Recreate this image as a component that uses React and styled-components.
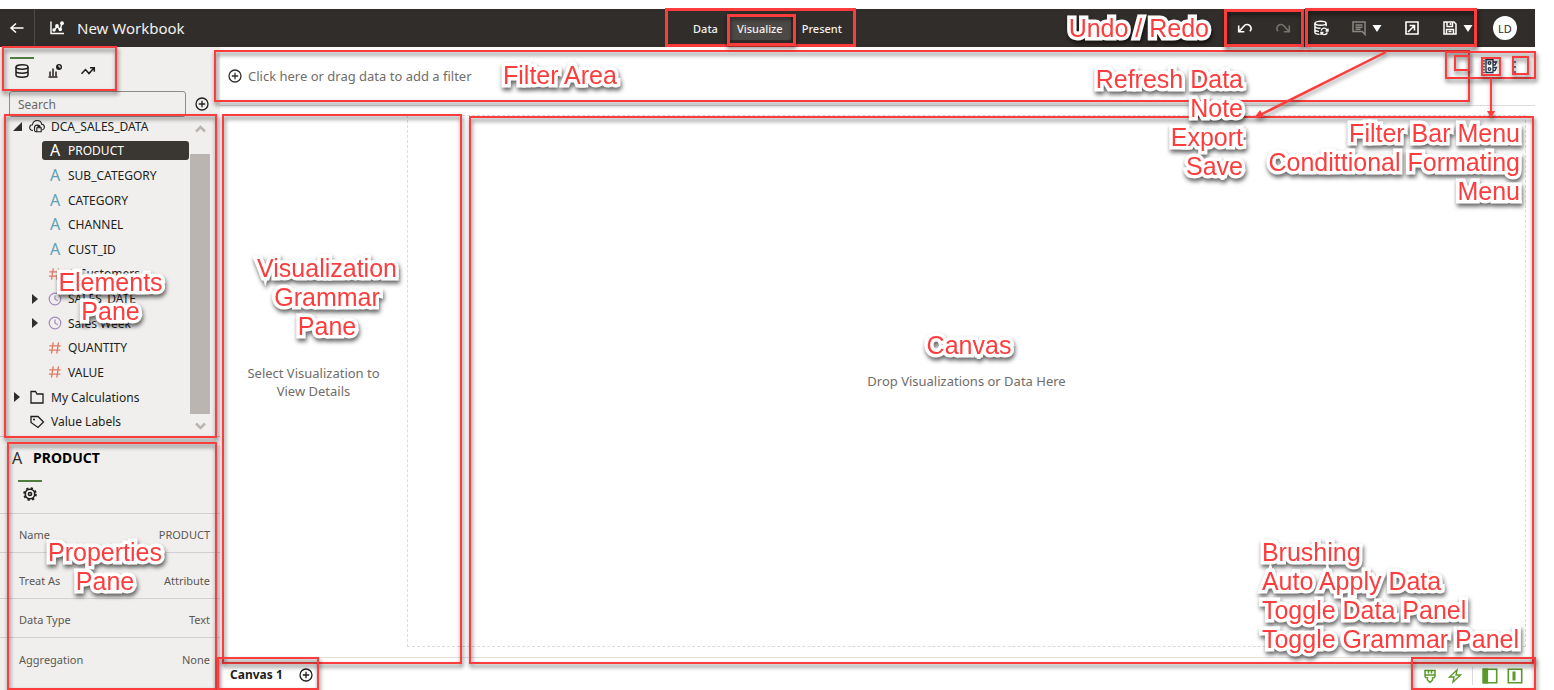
import React from 'react';
import styled, { createGlobalStyle, css } from 'styled-components';

const RED = '#fd3d3d';
const INK = '#312d2a';

const GlobalStyle = createGlobalStyle`
  * { box-sizing: border-box; }
  body { margin: 0; background: #fff; font-family: "Noto Sans", "Open Sans", sans-serif; color: #201e1c; }
  button, input { font: inherit; color: inherit; }
  button { border: 0; background: none; padding: 0; margin: 0; cursor: pointer; }
  ul, dl, dd, h1, h2, p { margin: 0; padding: 0; }
  ul { list-style: none; }
  svg { display: block; flex: none; }
`;

/* ---------- Page frame ---------- */
const Page = styled.div`
  position: relative;
  display: flex;
  flex-direction: column;
  min-height: 100vh;
  padding: 9px 19px 0 0;
`;

const Header = styled.header`
  display: grid;
  grid-template-columns: 1fr auto 1fr;
  align-items: center;
  height: 38px;
  background: ${INK};
  color: #fff;
`;

const Brand = styled.div`
  display: flex;
  align-items: center;
  align-self: stretch;
`;

const BackButton = styled.button`
  display: flex;
  align-items: center;
  align-self: stretch;
  justify-content: center;
  width: 35px;
  border-right: 1px solid #4e4a46;
  margin-right: 14px;
`;

const Title = styled.h1`
  margin-left: 12px;
  font-size: 15px;
  font-weight: 400;
  line-height: 24px;
  color: #f3f1ef;
`;

const Modes = styled.nav`
  display: flex;
  gap: 3px;
`;

const Mode = styled.button`
  height: 23px;
  padding: 0 8px;
  border-radius: 2px;
  font-size: 11px;
  font-weight: 500;
  color: #f3f1ef;
  background: ${(p) => (p.$active ? '#4c4845' : 'transparent')};
`;

const Actions = styled.div`
  display: flex;
  align-items: center;
  justify-content: flex-end;
  gap: 22px;
  padding-right: 18px;
`;

const ActionGroup = styled.div`
  display: flex;
  align-items: center;
  gap: 5px;
`;

const IconButton = styled.button`
  display: flex;
  align-items: center;
  justify-content: center;
  color: ${(p) => p.$color || 'inherit'};
`;

const Avatar = styled.button`
  width: 24px;
  height: 24px;
  margin-left: -2px;
  border-radius: 50%;
  background: #fff;
  color: ${INK};
  font-size: 11px;
`;

const Body = styled.div`
  display: grid;
  grid-template-columns: 220px 1fr;
  flex: 1;
`;

/* ---------- Sidebar ---------- */
const Sidebar = styled.aside`
  display: flex;
  flex-direction: column;
  background: #f0efed;
`;

const PanelTabs = styled.div`
  display: flex;
  gap: 9px;
  padding: 10px 10px 0;
  height: 44px;
`;

const PanelTab = styled.button`
  display: flex;
  align-items: center;
  justify-content: center;
  width: 24px;
  height: 26px;
  border-top: 2px solid ${(p) => (p.$active ? '#4f7d3f' : 'transparent')};
`;

const SearchRow = styled.div`
  display: flex;
  align-items: center;
  gap: 8px;
  height: 26px;
  padding-left: 9px;
`;

const SearchInput = styled.input`
  width: 177px;
  height: 26px;
  padding: 0 8px;
  border: 1px solid #8f8c88;
  border-radius: 3px;
  background: transparent;
  font-size: 12px;
  &::placeholder { color: #6b6763; opacity: 1; }
`;

const Elements = styled.div`
  display: flex;
  height: 320px;
  margin-top: -3px;
`;

const Tree = styled.ul`
  display: flex;
  flex: 1;
  flex-direction: column;
`;

const TreeItem = styled.li`
  display: flex;
  flex: 1;
  align-items: center;
  padding-left: ${(p) => (p.$nested ? 28 : 10)}px;
`;

const Twisty = styled.span`
  display: flex;
  justify-content: center;
  width: 14px;
`;

const TreeButton = styled.button`
  display: flex;
  flex: 1;
  align-items: center;
  gap: 6px;
  height: 19px;
  padding-left: ${(p) => (p.$nested ? 6 : 5)}px;
  border-radius: 3px;
  font-size: 12px;
  line-height: 19px;
  white-space: nowrap;
  text-align: left;
  ${(p) => p.$selected && css`background: #3a3631; color: #fff;`}
`;

const TypeMark = styled.span`
  display: flex;
  align-items: center;
  justify-content: center;
  width: 14px;
  font-size: 16px;
  color: ${(p) => p.$color};
`;

const ScrollRail = styled.div`
  display: flex;
  flex-direction: column;
  align-items: center;
  justify-content: space-between;
  width: 20px;
  margin: 4px 10px 0 1px;
  padding: 7px 0 4px;
`;

const Thumb = styled.div`
  width: 20px;
  flex: 1;
  margin: 21px 0 8px;
  background: #bab5b0;
`;

const Properties = styled.section`
  flex: 1;
  margin-top: 2px;
  border-top: 1px solid #c4c1be;
`;

const PropertiesHead = styled.div`
  display: flex;
  align-items: center;
  gap: 9px;
  padding: 8px 10px 0;
  height: 34px;
`;

const PropertiesTitle = styled.h2`
  font-size: 14px;
  font-weight: 700;
  line-height: 24px;
  color: #000;
`;

const PropertiesTabs = styled.div`
  display: flex;
  height: 43px;
  padding: 9px 18px 0;
  border-bottom: 1px solid #d2d0ce;
`;

const PropertyList = styled.dl`
  display: flex;
  flex-direction: column;
`;

const Property = styled.div`
  display: flex;
  align-items: flex-end;
  justify-content: space-between;
  height: ${(p) => (p.$tall ? 46 : 39)}px;
  padding: 0 10px 9px 19px;
  border-bottom: 1px solid #d2d0ce;
  font-size: 11px;
  line-height: 17px;
  color: #5c5853;
  &:last-child { border-bottom: 0; }
`;

/* ---------- Main area ---------- */
const Main = styled.main`
  display: flex;
  flex-direction: column;
  min-width: 0;
`;

const FilterBar = styled.div`
  display: flex;
  align-items: center;
  justify-content: space-between;
  height: 59px;
  padding-left: 7px;
  border-bottom: 1px solid #dddbd9;
`;

const FilterButton = styled.button`
  display: flex;
  align-items: center;
  gap: 5px;
  font-size: 13px;
  line-height: 20px;
  color: #716d68;
`;

const FilterTools = styled.div`
  display: flex;
  align-items: flex-start;
  align-self: stretch;
  gap: 14px;
  padding: 11px 7px 0 0;
`;

const Workspace = styled.div`
  display: grid;
  grid-template-columns: 187px 1fr;
  flex: 1;
  padding-right: 9px;
  border-bottom: 1px solid #e2e0de;
`;

const Hint = styled.p`
  font-size: 13px;
  line-height: 18px;
  color: #716d68;
  text-align: center;
`;

const Grammar = styled.section`
  display: flex;
  align-items: center;
  justify-content: center;
  padding: 0 20px;
`;

const Canvas = styled.section`
  display: flex;
  align-items: center;
  justify-content: center;
  margin: 9px 0 10px;
  border: 1px dashed #dedcda;
`;

const Footer = styled.footer`
  display: flex;
  align-items: center;
  justify-content: space-between;
  height: 32px;
  padding: 2px 12px 0 10px;
`;

const CanvasTabs = styled.div`
  display: flex;
  align-items: center;
  gap: 15px;
`;

const CanvasTab = styled.button`
  font-size: 12px;
  font-weight: 700;
  line-height: 20px;
`;

const FooterTools = styled.div`
  display: flex;
  align-items: center;
  gap: 9px;
  padding-top: 2px;
  color: #5b9a2b;
`;

const Separator = styled.span`
  width: 1px;
  height: 18px;
  background: #dddbd9;
`;

/* ---------- Callouts over the page ---------- */
const px = (name, v) => (v === undefined ? '' : `${name}: ${v}px;`);
const place = css`
  position: absolute;
  ${(p) => px('top', p.$top)}
  ${(p) => px('bottom', p.$bottom)}
  ${(p) => px('left', p.$left)}
  ${(p) => px('right', p.$right)}
  ${(p) => px('width', p.$width)}
  ${(p) => px('height', p.$height)}
`;

const Callouts = styled.div`
  position: absolute;
  inset: 0 19px 0 0;
  pointer-events: none;
`;

const Outline = styled.div`
  ${place}
  border: ${(p) => p.$line || 2}px solid ${RED};
  filter: drop-shadow(1px 3px 2px rgba(0, 0, 0, 0.6));
`;

const CenterRow = styled.div`
  position: absolute;
  inset: 8px 14px auto 0;
  display: flex;
  justify-content: center;
`;

const ModesOutline = styled.div`
  display: flex;
  justify-content: center;
  width: 191px;
  height: 39px;
  padding: 3px 0 0 1px;
  border: 3px solid ${RED};
`;

const ActiveModeOutline = styled.div`
  width: 69px;
  height: 32px;
  border: 3px solid ${RED};
  filter: drop-shadow(0 2px 2px rgba(0, 0, 0, 0.6));
`;

const Note = styled.p`
  ${place}
  font-family: "Liberation Sans", Arial, sans-serif;
  font-size: 25px;
  line-height: 29px;
  white-space: pre-line;
  text-align: ${(p) => p.$align || 'center'};
  color: ${RED};
  -webkit-text-stroke: 7px #fff;
  paint-order: stroke fill;
  filter: drop-shadow(1px 3px 2px rgba(0, 0, 0, 0.6));
`;

const Arrow = styled.svg`
  ${place}
  filter: drop-shadow(1px 3px 2px rgba(0, 0, 0, 0.4));
`;

/* ---------- Icons ---------- */
const Icon = ({ size = 16, w = 1.3, children }) => (
  <svg width={size} height={size} viewBox="0 0 16 16" fill="none" stroke="currentColor" strokeWidth={w} aria-hidden="true">
    {children}
  </svg>
);

const BackIcon = () => <Icon w={1.5}><path d="M14.5 8H2M7 3.5 2 8l5 4.500" /></Icon>;
const WorkbookIcon = () => (
  <Icon w={1.4}>
    <path d="M2 1.500V13.500H15M5 10.500l3-4M8 6.500l3.300 3L13 3.200" />
    <g fill="currentColor" stroke="none">
      <circle cx="5" cy="10" r="1.700" /><circle cx="8" cy="6" r="1.900" /><circle cx="11.300" cy="9.500" r="1.800" /><circle cx="13" cy="3.200" r="1.900" />
    </g>
  </Icon>
);
const UndoIcon = () => <Icon w={1.6}><path d="M1.700 5.500v6.300h5.600M2 11.500 7 6a3.800 3.800 0 0 1 5.800-.4c1.900 1.900 1.500 4 .1 5.700" /></Icon>;
const RedoIcon = () => <Icon w={1.6}><path d="M14.300 5.500v6.300H8.700M14 11.500 9 6a3.800 3.800 0 0 0-5.800-.4c-1.900 1.900-1.500 4-.1 5.700" /></Icon>;
const RefreshIcon = () => (
  <Icon w={1.4}>
    <ellipse cx="7.500" cy="3.200" rx="5.600" ry="2" />
    <path d="M1.900 3.200v9.300c0 1.100 2 1.800 4.600 1.900M13.100 3.200v3M1.900 6.300c0 1.300 2.500 2 5.600 2M1.900 9.500c0 1.100 1.800 1.700 4 1.900" />
    <path d="M8.200 10.500a3 3 0 0 1 5.600-.8l1 1.300M15 8.500V11h-2.500M14.300 12.500a3 3 0 0 1-5.200 1l-.9-1.100M8 15v-2.600h2.400" />
  </Icon>
);
const NoteIcon = () => <Icon w={1.5}><path d="M2 2h12v12.500L11.200 11.500H2zM4.500 5h7M4.500 7.200h7M4.500 9.200h5" /></Icon>;
const ExportIcon = () => <Icon w={1.6}><path d="M2 2h12v12H2zM5.500 5.500h5v5M10.300 5.700 4 12" /></Icon>;
const SaveIcon = () => <Icon w={1.5}><path d="M2 2h10l2 2v10H2zM5 2v4.500h5.500V2M8.500 3v2M4.500 14V9.500h7V14M6.500 11.500h3" /></Icon>;
const Caret = () => <svg width="10" height="7" viewBox="0 0 10 7" fill="#fff" aria-hidden="true"><path d="M.5 0h9L5 7z" /></svg>;
const PlusIcon = () => <Icon><circle cx="8" cy="8" r="6" /><path d="M8 4.800v6.400M4.800 8h6.400" /></Icon>;
const DataIcon = () => (
  <Icon w={1.5}>
    <ellipse cx="8" cy="4" rx="6" ry="2.200" />
    <path d="M2 4v8c0 1.300 2.600 2.200 6 2.200s6-.9 6-2.200V4M2 8c0 1.300 2.600 2.200 6 2.200s6-.9 6-2.200" />
  </Icon>
);
const ChartIcon = () => (
  <Icon w={1.5}>
    <path d="M1.500 14h9M3 13V8.500M6 13V5.500M9 13V8.500" />
    <circle cx="12" cy="4" r="3" fill="currentColor" stroke="none" /><path d="M12 4V2M12 4h2" stroke="#f0efed" strokeWidth="1" />
  </Icon>
);
const TrendIcon = () => <Icon w={1.5}><path d="M1.500 10.800 5.500 6.500l3.500 4 5-5.500M10 4.700h4.300v4" /></Icon>;
const OpenMark = () => <svg width="9" height="9" viewBox="0 0 9 9" fill={INK} aria-hidden="true"><path d="M9 0v9H0z" /></svg>;
const ClosedMark = () => <svg width="6" height="10" viewBox="0 0 6 10" fill={INK} aria-hidden="true"><path d="M0 0v10l6-5z" /></svg>;
const CloudIcon = () => (
  <Icon w={1.1}>
    <path d="M4 12.500C1.500 12.500.7 11 .7 9.500S2 6.700 3.500 6.700C4 4 6 2.500 8.200 2.500c2.400 0 4 1.500 4.500 3.700 1.600.2 2.700 1.500 2.700 3 0 1.400-.8 2.300-2.200 2.900" />
    <path d="M5.500 9.500c0-3 5-3 5.500-1M5.500 9.500v2.700c0 1 .8 1.600 2 1.800M7.800 9.800h4.400v4H7.800zM9 9.500V8.400h2v1.100" />
  </Icon>
);
const FolderIcon = () => <Icon><path d="M2 2.500h4.500L8 5h6v9H2z" /></Icon>;
const TagIcon = () => <Icon><path d="M2 2.500h7l5.500 5.500L9 13.500 2 8.500z" /><circle cx="5" cy="5.500" r="1" fill="currentColor" stroke="none" /></Icon>;
const ClockIcon = () => <Icon size={14} w={1.4}><circle cx="8" cy="8" r="6.600" /><path d="M8 4v4.200l3.200 1.800" /></Icon>;
const HashIcon = () => <Icon size={14} w={1.5}><path d="M6 1.500 4 14.500M12 1.500l-2 13M1.500 5.500h13M1 10.500h13" /></Icon>;
const GearIcon = () => (
  <Icon size={14} w={1.8}><circle cx="8" cy="8" r="5.400" /><circle cx="8" cy="8" r="1.800" /><circle cx="8" cy="8" r="6.800" strokeWidth="2" strokeDasharray="2.670 2.670" /></Icon>
);
const Chevron = ({ down }) => (
  <svg width="11" height="8" viewBox="0 0 11 8" fill="none" stroke="#bab5b0" strokeWidth="2.500" aria-hidden="true"><path d={down ? 'M1 1.500 5.500 6 10 1.500' : 'M1 6.500 5.500 2 10 6.500'} /></svg>
);
const FormatIcon = () => (
  <Icon w={1.3}>
    <path d="M4 1.500h7v13H4zM11 4h3.500L13 7h-2M11 9.500h3.500L13 12.500h-2" />
    <circle cx="7.500" cy="5" r="1.300" /><circle cx="7.500" cy="11" r="1.300" /><path d="M2 2v13" strokeDasharray="1.500 1.500" />
  </Icon>
);
const DotsIcon = () => <Icon><path d="M3 3v12" stroke="#3b5b87" strokeWidth="1.500" strokeDasharray="2 3" /></Icon>;
const BrushIcon = () => <Icon w={1.5}><path d="M3 2.500h10v5.200c0 1.500-1 2.300-2.500 2.300v2L8 14.500 5.500 12v-2C4 10 3 9.200 3 7.700zM3 7h10M6.500 2.500v3M9.500 2.500v3" /></Icon>;
const BoltIcon = () => <Icon w={1.4}><path d="M10 2 2.500 9H7l-1 5L13.500 7H9z" /></Icon>;
const LeftPanelIcon = () => <Icon w={1.6}><path d="M1.300 1.300h13.400v13.400H1.300z" /><path d="M1.300 1.300h4v13.400h-4z" fill="currentColor" /></Icon>;
const MidPanelIcon = () => <Icon w={1.6}><path d="M1.300 1.300h13.400v13.400H1.300z" /><path d="M5.500 3.500h3v9h-3z" fill="currentColor" stroke="none" /></Icon>;

const BLUE = '#5f9fb8';
const CORAL = '#dd7a66';
const VIOLET = '#a58bbd';

const ROWS = [
  { label: 'DCA_SALES_DATA', mark: 'open', icon: <CloudIcon /> },
  { label: 'PRODUCT', type: 'text', selected: true },
  { label: 'SUB_CATEGORY', type: 'text' },
  { label: 'CATEGORY', type: 'text' },
  { label: 'CHANNEL', type: 'text' },
  { label: 'CUST_ID', type: 'text' },
  { label: '# Customers', type: 'number' },
  { label: 'SALES_DATE', type: 'time', mark: 'closed' },
  { label: 'Sales Week', type: 'time', mark: 'closed' },
  { label: 'QUANTITY', type: 'number' },
  { label: 'VALUE', type: 'number' },
  { label: 'My Calculations', mark: 'closed', icon: <FolderIcon /> },
  { label: 'Value Labels', icon: <TagIcon /> },
];

const PROPS = [
  ['Name', 'PRODUCT'],
  ['Treat As', 'Attribute', true],
  ['Data Type', 'Text'],
  ['Aggregation', 'None'],
];

function ElementRow({ row }) {
  const nested = Boolean(row.type);
  return (
    <TreeItem $nested={nested}>
      <Twisty>{row.mark === 'open' ? <OpenMark /> : row.mark === 'closed' ? <ClosedMark /> : null}</Twisty>
      <TreeButton $nested={nested} $selected={row.selected}>
        {row.type === 'text' && <TypeMark $color={row.selected ? '#fff' : BLUE}>A</TypeMark>}
        {row.type === 'number' && <TypeMark $color={CORAL}><HashIcon /></TypeMark>}
        {row.type === 'time' && <TypeMark $color={VIOLET}><ClockIcon /></TypeMark>}
        {row.icon}
        <span>{row.label}</span>
      </TreeButton>
    </TreeItem>
  );
}

export default function App() {
  return (
    <Page>
      <GlobalStyle />
      <Header>
        <Brand>
          <BackButton aria-label="Back"><BackIcon /></BackButton>
          <WorkbookIcon />
          <Title>New Workbook</Title>
        </Brand>
        <Modes>
          <Mode>Data</Mode>
          <Mode $active>Visualize</Mode>
          <Mode>Present</Mode>
        </Modes>
        <Actions>
          <IconButton aria-label="Undo"><UndoIcon /></IconButton>
          <IconButton aria-label="Redo" $color="#75716d"><RedoIcon /></IconButton>
          <IconButton aria-label="Refresh data"><RefreshIcon /></IconButton>
          <ActionGroup>
            <IconButton aria-label="Note" $color="#8a8682"><NoteIcon /></IconButton>
            <IconButton aria-label="Note options"><Caret /></IconButton>
          </ActionGroup>
          <IconButton aria-label="Export"><ExportIcon /></IconButton>
          <ActionGroup>
            <IconButton aria-label="Save"><SaveIcon /></IconButton>
            <IconButton aria-label="Save options"><Caret /></IconButton>
          </ActionGroup>
          <Avatar>LD</Avatar>
        </Actions>
      </Header>

      <Body>
        <Sidebar>
          <PanelTabs>
            <PanelTab $active aria-label="Data"><DataIcon /></PanelTab>
            <PanelTab aria-label="Visualizations"><ChartIcon /></PanelTab>
            <PanelTab aria-label="Analytics"><TrendIcon /></PanelTab>
          </PanelTabs>
          <SearchRow>
            <SearchInput type="search" placeholder="Search" aria-label="Search" />
            <IconButton aria-label="Add data"><PlusIcon /></IconButton>
          </SearchRow>
          <Elements>
            <Tree>{ROWS.map((row) => <ElementRow key={row.label} row={row} />)}</Tree>
            <ScrollRail><Chevron /><Thumb /><Chevron down /></ScrollRail>
          </Elements>
          <Properties>
            <PropertiesHead>
              <TypeMark $color={INK}>A</TypeMark>
              <PropertiesTitle>PRODUCT</PropertiesTitle>
            </PropertiesHead>
            <PropertiesTabs>
              <PanelTab $active aria-label="General"><GearIcon /></PanelTab>
            </PropertiesTabs>
            <PropertyList>
              {PROPS.map(([name, value, tall]) => (
                <Property key={name} $tall={tall}><dt>{name}</dt><dd>{value}</dd></Property>
              ))}
            </PropertyList>
          </Properties>
        </Sidebar>

        <Main>
          <FilterBar>
            <FilterButton><IconButton as="span" $color={INK}><PlusIcon /></IconButton>Click here or drag data to add a filter</FilterButton>
            <FilterTools>
              <IconButton aria-label="Conditional formatting" $color="#26364d"><FormatIcon /></IconButton>
              <IconButton aria-label="Menu"><DotsIcon /></IconButton>
            </FilterTools>
          </FilterBar>
          <Workspace>
            <Grammar><Hint>Select Visualization to View Details</Hint></Grammar>
            <Canvas><Hint>Drop Visualizations or Data Here</Hint></Canvas>
          </Workspace>
          <Footer>
            <CanvasTabs>
              <CanvasTab>Canvas 1</CanvasTab>
              <IconButton aria-label="Add canvas"><PlusIcon /></IconButton>
            </CanvasTabs>
            <FooterTools>
              <IconButton aria-label="Brushing"><BrushIcon /></IconButton>
              <IconButton aria-label="Auto apply data"><BoltIcon /></IconButton>
              <Separator />
              <IconButton aria-label="Toggle data panel"><LeftPanelIcon /></IconButton>
              <IconButton aria-label="Toggle grammar panel"><MidPanelIcon /></IconButton>
            </FooterTools>
          </Footer>
        </Main>
      </Body>

      <Callouts>
        <Outline $top={46} $left={2} $width={115} $height={45} />
        <Outline $top={50} $left={214} $right={65} $height={52} />
        <Outline $top={114} $left={4} $width={213} $height={324} />
        <Outline $top={442} $left={7} $width={210} $bottom={0} />
        <Outline $top={114} $left={222} $width={240} $bottom={26} />
        <Outline $top={116} $left={469} $right={1} $bottom={26} />
        <Outline $top={657} $left={217} $width={102} $bottom={0} />
        <Outline $bottom={0} $right={-1} $width={125} $height={33} />
        <Outline $top={9} $right={231} $width={80} $height={38} $line={3} />
        <Outline $top={8} $right={58} $width={172} $height={39} $line={3} />
        <Outline $top={51} $right={-1} $width={91} $height={28} />
        <Outline $top={55} $right={65} $width={16} $height={16} />
        <Outline $top={57} $right={34} $width={20} $height={19} />
        <Outline $top={56} $right={6} $width={17} $height={19} />
        <CenterRow>
          <ModesOutline><ActiveModeOutline /></ModesOutline>
        </CenterRow>

        <Arrow $top={50} $right={146} $width={140} $height={72} viewBox="0 0 140 72">
          <path d="M137 2 11 65" stroke={RED} strokeWidth="2.500" />
          <path d="M5 68l6-8 4 7z" fill={RED} />
        </Arrow>
        <Arrow $top={78} $right={38} $width={12} $height={42} viewBox="0 0 12 42">
          <path d="M6 0v34" stroke={RED} strokeWidth="2" />
          <path d="M2 33h8l-4 7z" fill={RED} />
        </Arrow>

        <Note $top={14} $right={326} $align="right">Undo / Redo</Note>
        <Note $top={61} $left={503}>Filter Area</Note>
        <Note $top={65} $right={292} $align="right">{'Refresh Data\nNote\nExport\nSave'}</Note>
        <Note $top={119} $right={15} $align="right">{'Filter Bar Menu\nCondittional Formating\nMenu'}</Note>
        <Note $top={268} $left={4} $width={213}>{'Elements\nPane'}</Note>
        <Note $top={538} $left={4} $width={202}>{'Properties\nPane'}</Note>
        <Note $top={254} $left={222} $width={210}>{'Visualization\nGrammar\nPane'}</Note>
        <Note $top={331} $left={403} $right={0}>Canvas</Note>
        <Note $bottom={36} $right={16} $align="left">{'Brushing\nAuto Apply Data\nToggle Data Panel\nToggle Grammar Panel'}</Note>
      </Callouts>
    </Page>
  );
}
